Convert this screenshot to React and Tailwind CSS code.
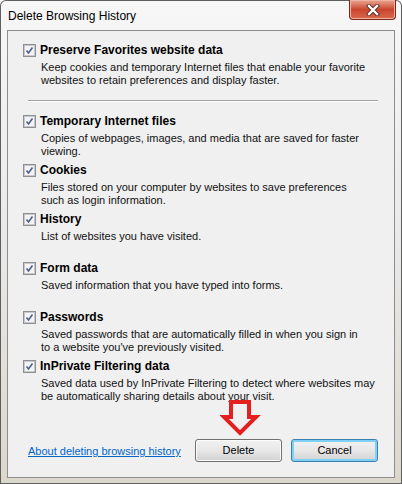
import React from 'react';

const items = [
  {
    title: 'Temporary Internet files',
    text: ['Copies of webpages, images, and media that are saved for faster', 'viewing.'],
  },
  {
    title: 'Cookies',
    text: ['Files stored on your computer by websites to save preferences', 'such as login information.'],
  },
  { title: 'History', text: ['List of websites you have visited.'] },
  { title: 'Form data', text: ['Saved information that you have typed into forms.'] },
  {
    title: 'Passwords',
    text: ['Saved passwords that are automatically filled in when you sign in', "to a website you've previously visited."],
  },
  {
    title: 'InPrivate Filtering data',
    text: ['Saved data used by InPrivate Filtering to detect where websites may', 'be automatically sharing details about your visit.'],
  },
];

function CheckBox() {
  return (
    <span className="w-[13px] h-[13px] shrink-0 border border-[#8e8f8f] bg-gradient-to-br from-[#dcdcdc] to-[#fbfbfb] flex items-center justify-center">
      <svg width="11" height="11" viewBox="0 0 11 11">
        <rect x="0.5" y="0.5" width="10" height="10" fill="#f4f4f4" stroke="#c5c8cf" />
        <path d="M2.5 5.5 L4.5 8 L8.5 2.5" fill="none" stroke="#4b5f93" strokeWidth="1.6" />
      </svg>
    </span>
  );
}

function Option({ title, text, fixed }) {
  return (
    <div className={fixed ? 'h-[49px]' : ''}>
      <div className="flex items-center h-4 gap-1">
        <CheckBox />
        <span className="text-[12px] font-bold text-black leading-4">{title}</span>
      </div>
      <div className="ml-[18px] mt-[3px] text-[11px] leading-[13px] text-[#111]">
        {text.map((t) => (
          <div key={t}>{t}</div>
        ))}
      </div>
    </div>
  );
}

export default function App() {
  return (
    <div
      className="relative w-[402px] h-[484px] rounded-t-[6px] bg-gradient-to-b from-[#f7f7f7] via-[#e9e9e9] to-[#dcd7cb] shadow-[inset_0_0_0_1px_#5f5f5f] flex flex-col overflow-hidden"
      style={{ fontFamily: '"Liberation Sans", Arial, sans-serif' }}
    >
      <div className="h-[30px] shrink-0 pl-2 pt-[8px] text-[12px] leading-4 text-black">Delete Browsing History</div>

      <div className="absolute top-0 right-[6px] w-[47px] h-[20px] rounded-b-[4px] border border-t-0 border-[#7a2518] bg-gradient-to-b from-[#e9a592] via-[#c9452d] to-[#d9694d] shadow-[inset_0_0_0_1px_#efb4a4] flex items-center justify-center">
        <svg width="14" height="12" viewBox="0 0 14 12">
          <path d="M3 2 L11 10 M11 2 L3 10" stroke="#5a2a22" strokeWidth="4.2" strokeLinecap="square" />
          <path d="M3 2 L11 10 M11 2 L3 10" stroke="#ffffff" strokeWidth="2.4" strokeLinecap="square" />
        </svg>
      </div>

      <div className="relative ml-[7px] w-[388px] h-[448px] border border-[#8d8d8d] bg-[#f0f0f0] flex flex-col pt-[11px] pl-[15px]">
        <Option
          title="Preserve Favorites website data"
          text={['Keep cookies and temporary Internet files that enable your favorite', 'websites to retain preferences and display faster.']}
        />
        <div className="ml-[5px] mr-[16px] mt-[13px] h-[2px] border-t border-[#a0a0a0] border-b border-b-white" />
        <div className="mt-[11px]">
          {items.map((it) => (
            <Option key={it.title} title={it.title} text={it.text} fixed />
          ))}
        </div>

        <div className="mt-auto mb-[15px] mr-[16px] ml-[5px] flex items-center">
          <span className="text-[11px] text-[#0066cc] underline leading-[13px] mt-[2px]">About deleting browsing history</span>
          <div className="ml-auto flex gap-[9px]">
            <button className="w-[87px] h-[23px] rounded-[3px] border border-[#707070] bg-gradient-to-b from-[#f2f2f2] via-[#e7e7e7] to-[#d2d2d2] shadow-[inset_0_0_0_1px_#fbfbfb] text-[11px] text-black">
              Delete
            </button>
            <button className="w-[87px] h-[23px] rounded-[3px] border border-[#3c7fb1] bg-gradient-to-b from-[#f2f2f2] via-[#e7e7e7] to-[#d2d2d2] shadow-[inset_0_0_0_2px_#7fd0f5] text-[11px] text-black">
              Cancel
            </button>
          </div>
        </div>

        <svg className="absolute left-[212px] top-[367px]" width="42" height="42" viewBox="0 0 42 42">
          <polygon points="11,4 29,4 29,19 36,19 20,35 4,19 11,19" fill="none" stroke="#e3201f" strokeWidth="4" strokeLinejoin="miter" />
        </svg>
      </div>
    </div>
  );
}
